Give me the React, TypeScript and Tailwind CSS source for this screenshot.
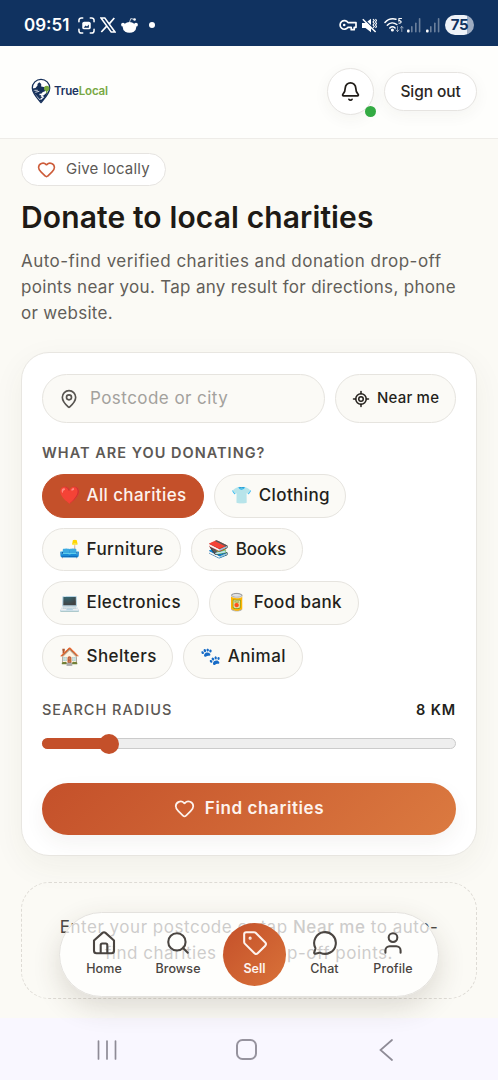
import { Bell, Heart, LocateFixed, MapPin, MessageCircle, Search, Tag, User } from 'lucide-react'
import type { ReactNode } from 'react'

interface Category {
  emoji: string
  label: string
  box: string
  text: string
  active?: boolean
}

const categories: Category[] = [
  { emoji: '❤️', label: 'All charities', box: 'w-[162px]', text: 'tracking-[0.38px]', active: true },
  { emoji: '👕', label: 'Clothing', box: 'w-[132px]', text: 'tracking-[0.4px]' },
  { emoji: '🛋️', label: 'Furniture', box: 'w-[139px]', text: 'tracking-[0.45px]' },
  { emoji: '📚', label: 'Books', box: 'w-[112px]', text: 'tracking-[0px]' },
  { emoji: '💻', label: 'Electronics', box: 'w-[157px]', text: 'tracking-[0.4px]' },
  { emoji: '🥫', label: 'Food bank', box: 'w-[150px]', text: 'tracking-[0.35px]' },
  { emoji: '🏠', label: 'Shelters', box: 'w-[131px]', text: 'tracking-[0.4px]' },
  { emoji: '🐾', label: 'Animal', box: 'w-[120px]', text: 'tracking-[0.45px]' }
]

function SignalIcon() {
  return (
    <svg viewBox="0 0 14 16" className="h-4 w-3.5" fill="#fff">
      <rect x="0" y="12.5" width="2.6" height="3" rx="1" />
      <g opacity=".38">
        <rect x="4" y="9" width="1.6" height="6.5" rx=".8" />
        <rect x="8" y="5.5" width="1.6" height="10" rx=".8" />
        <rect x="11.8" y="1" width="1.6" height="14.5" rx=".8" />
      </g>
    </svg>
  )
}

function StatusBar() {
  return (
    <div className="flex h-[46px] shrink-0 items-center bg-[#103260] pt-1 pl-6 pr-6 text-white">
      <span className="w-[46px] whitespace-nowrap pt-[1px] text-[17px] font-semibold">09:51</span>
      <svg viewBox="0 0 18 18" className="ml-2 h-[17px] w-[17px]" fill="none" stroke="#fff" strokeWidth="1.6" strokeLinecap="round">
        <path d="M1 5V3.500A2.500 2.500 0 0 1 3.500 1H5M13 1h1.500A2.500 2.500 0 0 1 17 3.500V5M17 13v1.500A2.500 2.500 0 0 1 14.500 17H13M5 17H3.500A2.500 2.500 0 0 1 1 14.500V13" />
        <rect x="4.500" y="5" width="9" height="8" rx="2" fill="#fff" stroke="none" />
        <path d="M6 11.500 8 9l1.500 1L11.500 8v3.500z" fill="#103260" stroke="none" />
      </svg>
      <svg viewBox="0 0 16 16" className="ml-[5px] h-4 w-4" fill="none" stroke="#fff">
        <path d="M1 1h3.800L15 15h-3.800z" strokeWidth="1.500" />
        <path d="M14.300 1 9 7.100M6.800 9.200 1.300 15" strokeWidth="1.700" />
      </svg>
      <svg viewBox="0 0 16 16" className="ml-[5px] h-[17px] w-[17px]" fill="#fff">
        <ellipse cx="8" cy="9.800" rx="6.300" ry="5" />
        <circle cx="1.900" cy="7.300" r="1.800" />
        <circle cx="14.100" cy="7.300" r="1.800" />
        <circle cx="12.800" cy="2.400" r="1.200" />
        <path d="M8 5 9.200 1.500 12.500 2.200" fill="none" stroke="#fff" strokeWidth=".7" />
      </svg>
      <span className="ml-[11px] h-[6px] w-[6px] rounded-full bg-white" />

      <div className="ml-auto flex items-center">
        <svg viewBox="0 0 18 12" className="h-3 w-[18px]" fill="none" stroke="#fff" strokeWidth="1.700" strokeLinejoin="round">
          <path d="M9 3.600A4.300 4.300 0 1 0 9 8.300h3.200v2.400h3V8.300h1.800V3.600z" />
          <circle cx="5.200" cy="6" r="1.300" fill="#fff" stroke="none" />
        </svg>
        <svg viewBox="0 0 15 15" className="ml-[5px] h-[15px] w-[15px]" fill="none" stroke="#fff" strokeWidth="1.500">
          <path d="M0 5h3.500L9 .8v13.400L3.500 10H0z" fill="#fff" stroke="none" />
          <path d="m2 1 12.500 12.500" stroke="#103260" strokeWidth="1.200" />
          <path d="m.8 1.200 12.800 12.800" />
          <path d="m11 1 1.300 1.500L11 4l1.300 1.500L11 7l1.300 1.500L11 10M13.500 1l1 1.500-1 1.500 1 1.500-1 1.500 1 1.500-1 1.500" strokeWidth="1.100" />
        </svg>
        <svg viewBox="0 0 20 16" className="ml-[7px] h-4 w-5" fill="none" stroke="#fff" strokeWidth="1.500" strokeLinecap="round">
          <path d="M1 5.500C4 2 8 1.300 12 2.200M3.300 8.300c2.600-2.800 6.500-3 9.500-.8M5.800 11c1.700-1.500 3.700-1.500 5.300 0" />
          <circle cx="8.400" cy="13" r=".8" fill="#fff" />
          <path d="M17.500 1.500H15l-.2 2.300c2.800-.7 3.300 2.800.2 2.400" strokeWidth="1.200" />
          <path d="M13.500 9.500v5m-1.500-1.500 1.500 1.500 1.500-1.500M17.800 14.500v-5m-1.500 1.500 1.500-1.500 1.500 1.500" strokeWidth="1" opacity=".5" />
        </svg>
        <div className="ml-[3px] flex gap-[5px]">
          <SignalIcon />
          <SignalIcon />
        </div>
        <div className="ml-[5px] flex h-5 w-[29px] items-center justify-center rounded-full bg-[linear-gradient(90deg,#eef2f8_76%,#9eacc2_76%)] text-[15px] font-bold tracking-[-0.3px] text-[#103260]">
          75
        </div>
      </div>
    </div>
  )
}

function Logo() {
  return (
    <div className="flex items-center gap-[3px]">
      <svg viewBox="0 0 20 26" className="h-[26px] w-5">
        <path d="M10 24.500C6.500 20.500 1.300 15.500 1.300 10a8.700 8.700 0 0 1 17.400 0c0 5.500-5.200 10.500-8.700 14.500z" fill="#fff" stroke="#152f59" strokeWidth="1.300" />
        <path d="M1.500 10.500 4.500 10l2-2.500V6l1.800-1.700L10.200 6v2.500L14 9.300l.5 3.700-3 1.300-1.500 2.200 3 1.500-3.500 4L3.500 15.500z" fill="#152f59" />
        <path d="M12.500 17.500 17 13.500l-2.500 5.500L10 24l-1.500-1.500z" fill="#152f59" />
        <path d="M3.300 12.300h3.500M4.300 14.300l4-1" stroke="#fff" strokeWidth=".8" />
        <path d="M8.500 16.500l3.300-.3-1.300 1.800 1.700 1-2.700 2.500" stroke="#fff" strokeWidth="1.300" fill="none" />
        <circle cx="15.700" cy="10.500" r="2.700" fill="#76a83e" />
        <path d="M15.100 12h1.200v3.300h-1.200z" fill="#76a83e" />
      </svg>
      <span className="whitespace-nowrap pt-[1px] text-[11.5px] font-semibold tracking-[-0.15px] text-[#1c3563]">
        True<span className="text-[#78a844]">Local</span>
      </span>
    </div>
  )
}

function Header() {
  return (
    <header className="flex h-[93px] shrink-0 items-center justify-between border-b border-[#eeece8] bg-[#fefefc] pb-[2px] pl-[31px] pr-[21px]">
      <Logo />
      <div className="flex items-center gap-[10px]">
        <button className="relative flex h-[47px] w-[47px] items-center justify-center rounded-full border border-[#e6e4e1] bg-white shadow-[0_4px_16px_rgba(60,50,30,0.05)]">
          <Bell className="h-[21px] w-[21px] text-[#211d19]" strokeWidth={2} />
          <span className="absolute -bottom-[3px] -right-[3px] h-[11px] w-[11px] rounded-full bg-[#33ab43]" />
        </button>
        <button className="flex h-[39px] w-[93px] items-center justify-center whitespace-nowrap rounded-full border border-[#e6e4e1] bg-white pt-[1px] text-[15.5px] font-medium tracking-[-0.1px] text-[#2b2724] shadow-[0_4px_16px_rgba(60,50,30,0.05)]">
          Sign out
        </button>
      </div>
    </header>
  )
}

function CategoryChip({ emoji, label, box, text, active }: Category) {
  return (
    <button
      className={`flex h-[43.5px] items-center whitespace-nowrap rounded-full border pl-[16.5px] text-[17px] font-medium ${box} ${
        active ? 'border-[#c4502a] bg-[#c4502a] text-[#fdf3ee]' : 'border-[#e6e4df] bg-[#fbfaf6] text-[#231f1b]'
      }`}
    >
      <span className="w-[27px] shrink-0 text-left font-['Noto_Color_Emoji',sans-serif]">{emoji}</span>
      <span className={text}>{label}</span>
    </button>
  )
}

function SearchCard() {
  return (
    <section className="mt-[26px] h-[504px] rounded-[28px] border border-[#e8e6e1] bg-white px-5 pt-[21px] shadow-[0_10px_32px_rgba(70,60,30,0.06)]">
      <div className="flex gap-[10px]">
        <div className="flex h-[49px] w-[283px] items-center gap-3 rounded-full border border-[#e6e4df] bg-[#fbfaf6] pl-4">
          <MapPin className="h-5 w-5 text-[#575450]" />
          <span className="-ml-px whitespace-nowrap text-[17px] tracking-[0.45px] text-[#a3a19d]">Postcode or city</span>
        </div>
        <button className="flex h-[49px] w-[121px] items-center gap-[7px] whitespace-nowrap rounded-full border border-[#e6e4df] bg-[#fbfaf6] pl-4 text-[15px] font-medium tracking-[0.2px] text-[#231f1b]">
          <LocateFixed className="h-[18px] w-[18px]" />
          Near me
        </button>
      </div>

      <h2 className="mt-[19px] h-[22px] text-[14.5px] leading-[22px] font-semibold tracking-[1.02px] text-[#5d5955]">WHAT ARE YOU DONATING?</h2>
      <div className="mt-[10px] flex flex-wrap gap-[10.2px]">
        {categories.map((c) => (
          <CategoryChip key={c.label} {...c} />
        ))}
      </div>

      <div className="mt-[20px] flex h-[22px] items-center justify-between text-[14.5px]">
        <span className="font-medium tracking-[1px] text-[#5d5955]">SEARCH RADIUS</span>
        <span className="font-semibold tracking-[0.9px] text-[#231f1b]">8 KM</span>
      </div>
      <div className="mt-[13px] flex h-5 items-center">
        <div className="flex h-[11px] w-full items-center rounded-full border border-[#cbcbcb] bg-[#eeeeee]">
          <div className="-ml-px h-[11px] w-[67px] rounded-l-full bg-[#c4502a]" />
          <div className="-ml-[10px] h-5 w-5 shrink-0 rounded-full bg-[#c4502a]" />
        </div>
      </div>

      <button className="mt-[29px] flex h-[52px] w-full items-center justify-center gap-[10px] rounded-full bg-[linear-gradient(135deg,#c4502a,#db7a40)] text-[17px] font-semibold tracking-[0.6px] text-[#fdf3ee] shadow-[0_8px_20px_rgba(60,50,30,0.06)]">
        <Heart className="h-[21px] w-[21px]" strokeWidth={2} />
        Find charities
      </button>
    </section>
  )
}

function HomeIcon() {
  return (
    <svg viewBox="0 0 26 26" className="h-[26px] w-[26px]" fill="none" stroke="currentColor" strokeWidth="2.1" strokeLinejoin="round">
      <path d="M3 10.500 11.500 2.900a2.300 2.300 0 0 1 3 0L23 10.500V20.800a2.500 2.500 0 0 1-2.500 2.500h-15A2.500 2.500 0 0 1 3 20.800z" />
      <path d="M9.700 23.300v-8.300a1.500 1.500 0 0 1 1.500-1.500h3.600a1.500 1.500 0 0 1 1.500 1.500v8.300" />
    </svg>
  )
}

function NavItem({ icon, label, width }: { icon: ReactNode; label: string; width: string }) {
  return (
    <div className={`flex flex-col items-center text-[#4a4541] ${width}`}>
      {icon}
      <span className="mt-[5px] text-[12.5px] leading-4 font-medium tracking-[0.1px]">{label}</span>
    </div>
  )
}

function BottomNav() {
  return (
    <nav className="absolute left-[59px] top-[912px] flex h-[85px] w-[380px] items-center rounded-full border border-[#e4e2de] bg-white/72 pb-[2px] pl-2 shadow-[0_10px_28px_rgba(60,50,30,0.16)]">
      <NavItem icon={<HomeIcon />} label="Home" width="w-[72px]" />
      <NavItem icon={<Search className="h-[26px] w-[26px]" strokeWidth={1.9} />} label="Browse" width="w-[76px]" />
      <div className="ml-[7px] mt-[2px] flex h-[63px] w-[63px] shrink-0 flex-col items-center rounded-full bg-[linear-gradient(135deg,#c4502a,#d97239)] pt-[7px] text-[#fdf3ee]">
        <Tag className="h-[26px] w-[26px]" strokeWidth={1.9} />
        <span className="mt-[5px] text-[12.5px] leading-4 font-semibold">Sell</span>
      </div>
      <NavItem icon={<MessageCircle className="h-[26px] w-[26px]" strokeWidth={1.9} />} label="Chat" width="w-[77px]" />
      <NavItem icon={<User className="h-[26px] w-[26px]" strokeWidth={1.9} />} label="Profile" width="w-[60px]" />
    </nav>
  )
}

export default function App() {
  return (
    <div className="relative flex h-[1080px] w-[498px] flex-col overflow-hidden bg-[#fbfaf5] font-['Inter','Liberation_Sans',sans-serif]">
      <StatusBar />
      <Header />
      <main className="h-[879px] px-[21px] pt-[14px]">
        <div className="flex h-[33px] w-[145px] items-center gap-[10px] whitespace-nowrap rounded-full border border-[#e6e4e1] bg-white pl-[15px] text-[15px] tracking-[0.2px] text-[#5d5955]">
          <Heart className="h-[19px] w-[19px] text-[#cd5c3a]" />
          Give locally
        </div>
        <h1 className="mt-[12px] whitespace-nowrap text-[30px] leading-[38px] font-semibold tracking-[0.12px] text-[#1e1a16]">Donate to local charities</h1>
        <p className="mt-[12px] whitespace-nowrap text-[17px] leading-[26px] tracking-[0.31px] text-[#625e59]">
          <span className="tracking-[0.48px]">Auto-find verified charities and donation drop-off</span>
          <br />
          points near you. Tap any result for directions, phone
          <br />
          or website.
        </p>
        <SearchCard />
        <section className="mt-[26px] h-[117px] whitespace-nowrap rounded-[28px] border border-dashed border-[#dedbd5] pt-[31px] text-center text-[17px] leading-[26px] tracking-[0.52px] text-[#4d4945]">
          Enter your postcode or tap <span className="font-medium">Near me</span> to auto-
          <br />
          find charities and drop-off points.
        </section>
      </main>
      <BottomNav />

      <div className="flex h-[62px] shrink-0 items-center bg-[#f9f7ff] pl-[97px] pt-[1px]">
        <svg viewBox="0 0 20 20" className="h-5 w-5" stroke="#8e8b96" strokeWidth="1.700" strokeLinecap="round">
          <path d="M1.500 1v18M10 1v18M18.500 1v18" />
        </svg>
        <div className="ml-[119px] h-[21px] w-[21px] rounded-[6.5px] border-2 border-[#96939e]" />
        <svg viewBox="0 0 14 22" className="ml-[122px] h-[22px] w-3.5" fill="none" stroke="#8e8b96" strokeWidth="1.700" strokeLinecap="round">
          <path d="M13 1 1.500 11 13 21" />
        </svg>
      </div>
    </div>
  )
}
